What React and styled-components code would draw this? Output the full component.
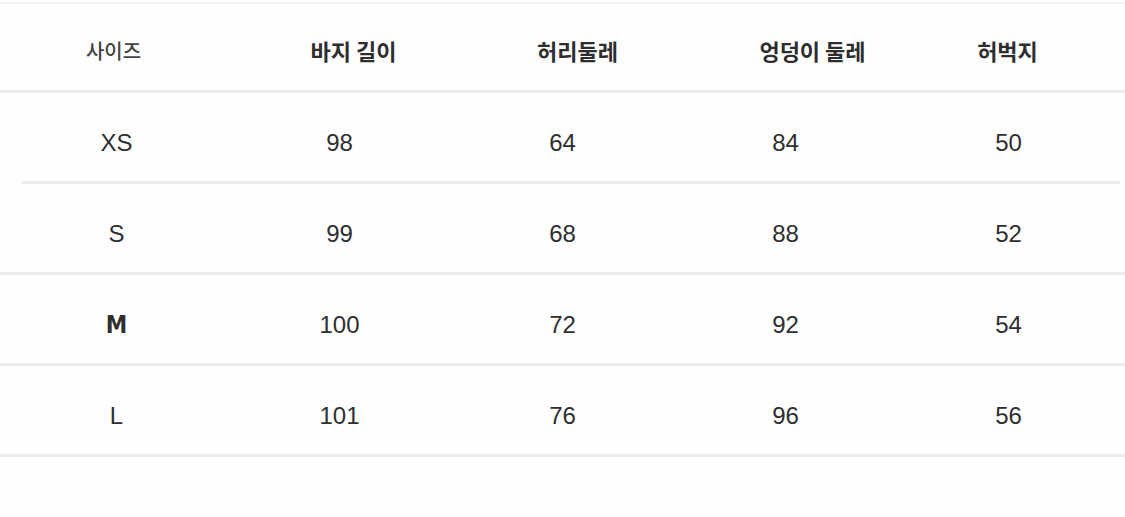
import React from 'react';
import styled, { createGlobalStyle } from 'styled-components';

const GlobalStyle = createGlobalStyle`
  html, body {
    margin: 0;
    padding: 0;
    background: #fefefe;
  }
  body {
    width: 1125px;
    height: 517px;
    overflow: hidden;
    font-family: 'Liberation Sans', 'Noto Sans CJK KR', sans-serif;
    color: #333;
  }
`;

const Table = styled.div`
  width: 1125px;
  padding-top: 3px;
  border-top: 2px solid #f4f4f4;
  margin-top: 2px;
  box-sizing: border-box;
`;

const Row = styled.div`
  display: grid;
  grid-template-columns: repeat(5, 223px);
  padding-left: 5px;
  height: ${props => (props.header ? '83px' : '88px')};
  box-sizing: border-box;
  padding-top: ${props => (props.header ? '3px' : '12px')};
  align-items: center;
  position: relative;
  margin-bottom: 3px;
  &::after {
    content: '';
    position: absolute;
    left: ${props => props.inset || 0}px;
    right: ${props => (props.inset ? 5 : 0)}px;
    bottom: -3px;
    height: 3px;
    background: #ececec;
  }
`;

const HeadCell = styled.div`
  text-align: center;
  font-family: 'Noto Sans CJK KR', sans-serif;
  font-size: ${props => (props.light ? '20px' : '22px')};
  font-weight: ${props => (props.light ? 500 : 700)};
  color: ${props => (props.light ? '#444' : '#2e2e2e')};
  transform: translateX(${props => props.shift || 0}px);
  white-space: nowrap;
`;

const Cell = styled.div`
  text-align: center;
  font-size: 24px;
  color: #2f2f2f;
`;

const SizeCell = styled(Cell)`
  font-weight: ${props => (props.bold ? 700 : 400)};
  font-family: ${props =>
    props.bold
      ? "'Liberation Sans Narrow', 'DejaVu Sans Condensed', sans-serif"
      : "'Liberation Sans', sans-serif"};
`;

const headers = [
  { label: '사이즈', light: true, shift: -3 },
  { label: '바지 길이', shift: 14 },
  { label: '허리둘레', shift: 15 },
  { label: '엉덩이 둘레', shift: 27 },
  { label: '허벅지', shift: -1 },
];

const rows = [
  { size: 'XS', values: [98, 64, 84, 50], inset: 22 },
  { size: 'S', values: [99, 68, 88, 52] },
  { size: 'M', values: [100, 72, 92, 54], bold: true },
  { size: 'L', values: [101, 76, 96, 56] },
];

export default function App() {
  return (
    <>
      <GlobalStyle />
      <Table>
        <Row header>
          {headers.map(h => (
            <HeadCell key={h.label} light={h.light} shift={h.shift}>
              {h.label}
            </HeadCell>
          ))}
        </Row>
        {rows.map(r => (
          <Row key={r.size} inset={r.inset}>
            <SizeCell bold={r.bold}>{r.size}</SizeCell>
            {r.values.map((v, i) => (
              <Cell key={i}>{v}</Cell>
            ))}
          </Row>
        ))}
      </Table>
    </>
  );
}
